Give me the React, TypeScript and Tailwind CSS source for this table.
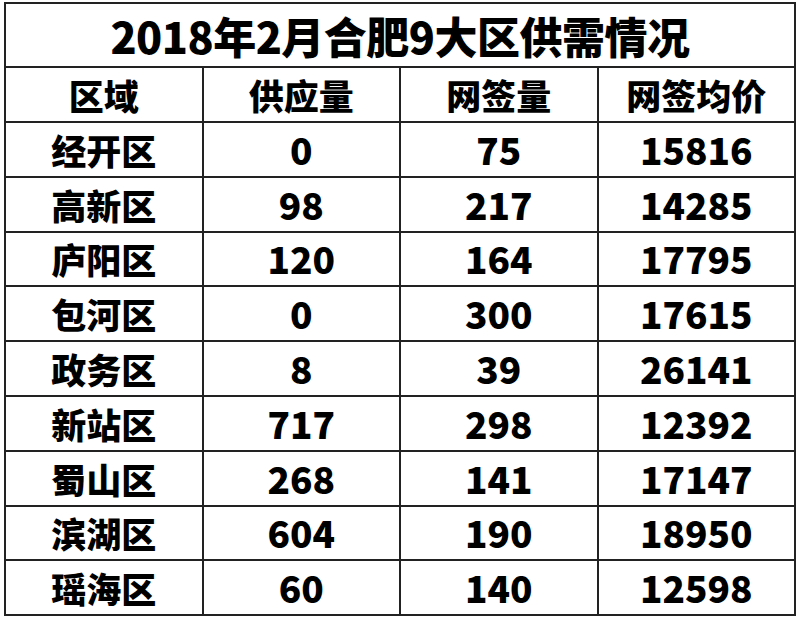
const rows: [string, string, string, string][] = [
  ["经开区", "0", "75", "15816"],
  ["高新区", "98", "217", "14285"],
  ["庐阳区", "120", "164", "17795"],
  ["包河区", "0", "300", "17615"],
  ["政务区", "8", "39", "26141"],
  ["新站区", "717", "298", "12392"],
  ["蜀山区", "268", "141", "17147"],
  ["滨湖区", "604", "190", "18950"],
  ["瑶海区", "60", "140", "12598"],
];

const headers = ["区域", "供应量", "网签量", "网签均价"];

export default function App() {
  return (
    <div
      className="w-[800px] h-[620px] bg-white pl-[4px] pt-[2px] text-black font-black"
      style={{ fontFamily: '"Noto Sans CJK SC", "Noto Sans", sans-serif' }}
    >
      <div className="w-[792px] grid grid-cols-4 grid-rows-[64px_55px_repeat(9,54.8px)] border-l-2 border-t-2 border-[#222]">
        {/* Title */}
        <div className="col-span-4 flex items-center justify-center border-r-2 border-b-2 border-[#222] text-[43px] leading-none tracking-[-0.5px]">
          2018年2月合肥9大区供需情况
        </div>

        {/* Header */}
        {headers.map((h) => (
          <div
            key={h}
            className="flex items-center justify-center border-r-2 border-b-2 border-[#222] text-[35px] leading-none"
          >
            {h}
          </div>
        ))}

        {/* Data */}
        {rows.map((r) =>
          r.map((c, i) => (
            <div
              key={r[0] + i}
              className={
                "flex items-center justify-center border-r-2 border-b-2 border-[#222] leading-none " +
                (i === 0 ? "text-[35px]" : "text-[37px]")
              }
            >
              {c}
            </div>
          ))
        )}
      </div>
    </div>
  );
}
